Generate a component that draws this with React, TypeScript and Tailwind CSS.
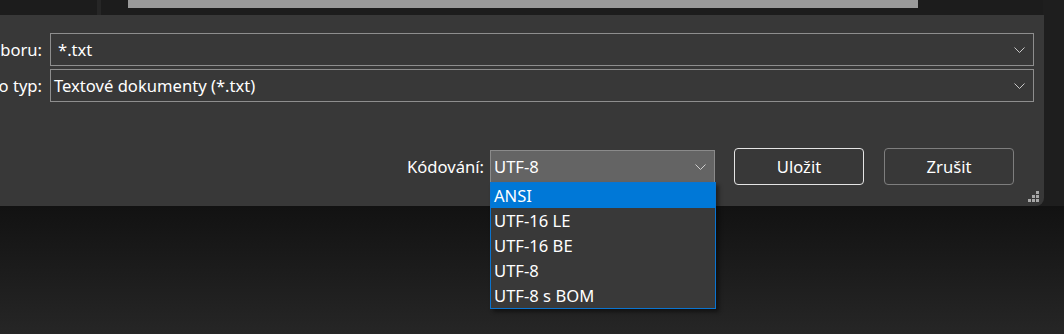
import React from "react";

const font = { fontFamily: '"Noto Sans", "Open Sans", sans-serif' };

function Chevron({ color = "#c8c8c8" }: { color?: string }) {
  return (
    <svg width="11" height="6" viewBox="0 0 11 6" className="shrink-0">
      <polyline points="0.5,0.5 5.5,5.5 10.5,0.5" fill="none" stroke={color} strokeWidth="1" />
    </svg>
  );
}

function Grip() {
  const dots = [
    [8, 0],
    [4, 4],
    [8, 4],
    [0, 8],
    [4, 8],
    [8, 8],
  ];
  return (
    <svg width="11" height="11" viewBox="0 0 11 11">
      {dots.map(([x, y], i) => (
        <rect key={i} x={x} y={y} width="3" height="3" fill="#a8a8a8" />
      ))}
    </svg>
  );
}

export default function App() {
  const items = ["ANSI", "UTF-16 LE", "UTF-16 BE", "UTF-8", "UTF-8 s BOM"];
  return (
    <div className="w-[1064px] h-[334px] overflow-hidden flex flex-col text-white text-[16.6px] leading-none" style={font}>
      {/* top strip */}
      <div className="h-[15px] flex bg-[#1c1c1c] shrink-0">
        <div className="w-[97px]" />
        <div className="w-[4px] bg-[#262626]" />
        <div className="w-[27px]" />
        <div className="w-[790px] h-[8px] bg-[#9a9a9a]" />
        <div className="flex-1" />
        <div className="w-[21px] bg-[#1e1e1e]" />
      </div>
      <div className="flex shrink-0 bg-[#1e1e1e]">
        <div className="w-[1044px] h-[191px] bg-[#383838] rounded-br-[8px] relative flex flex-col pt-[18px]">
          <div className="flex items-center h-[33px]">
            <div className="w-[43px] flex justify-end whitespace-nowrap pr-[1px] pt-[2px]">
              <span>boru:</span>
            </div>
            <div className="ml-[7px] w-[984px] h-[33px] border border-[#8e8e8e] flex items-center pl-[7px] pr-[8px]">
              <span className="flex-1 pt-[2px]">*.txt</span>
              <Chevron />
            </div>
          </div>
          <div className="flex items-center h-[33px] mt-[3px]">
            <div className="w-[43px] flex justify-end whitespace-nowrap pr-[1px] pt-[2px]">
              <span>o typ:</span>
            </div>
            <div className="ml-[7px] w-[984px] h-[33px] border border-[#8e8e8e] flex items-center pl-[3px] pr-[8px]">
              <span className="flex-1 pt-[2px]">Textové dokumenty (*.txt)</span>
              <Chevron />
            </div>
          </div>
          <div className="flex items-center mt-[46px] h-[37px]">
            <div className="w-[485px] flex justify-end pr-[1px] pt-[2px]">
              <span>Kódování:</span>
            </div>
            <div className="relative ml-[5px]">
              <div className="w-[225px] h-[33px] bg-[#646464] border border-[#8a8a8a] flex items-center pl-[3px] pr-[8px]">
                <span className="flex-1 pt-[2px]">UTF-8</span>
                <Chevron color="#cfcfcf" />
              </div>
              <div className="absolute left-0 top-[32px] w-[226px] bg-[#393939] border border-[#0a74d0] shadow-[3px_3px_4px_rgba(0,0,0,0.45)] z-10">
                {items.map((it, i) => (
                  <div
                    key={it}
                    className={
                      "h-[25px] flex items-center pl-[3px] pt-[2px] " +
                      (i === 0 ? "bg-[#0078d7]" : "")
                    }
                  >
                    {it}
                  </div>
                ))}
              </div>
            </div>
            <button className="ml-[19px] w-[130px] h-[37px] rounded-[4px] border border-[#e4e4e4] bg-[#383838] text-white pt-[2px]">
              Uložit
            </button>
            <button className="ml-[20px] w-[130px] h-[37px] rounded-[4px] border border-[#7e7e7e] bg-[#383838] text-white pt-[2px]">
              Zrušit
            </button>
          </div>
          <div className="absolute right-[5px] bottom-[4px]">
            <Grip />
          </div>
        </div>
        <div className="flex-1" />
      </div>
      <div className="flex-1 bg-gradient-to-b from-[#121212] to-[#262626]" />
    </div>
  );
}
